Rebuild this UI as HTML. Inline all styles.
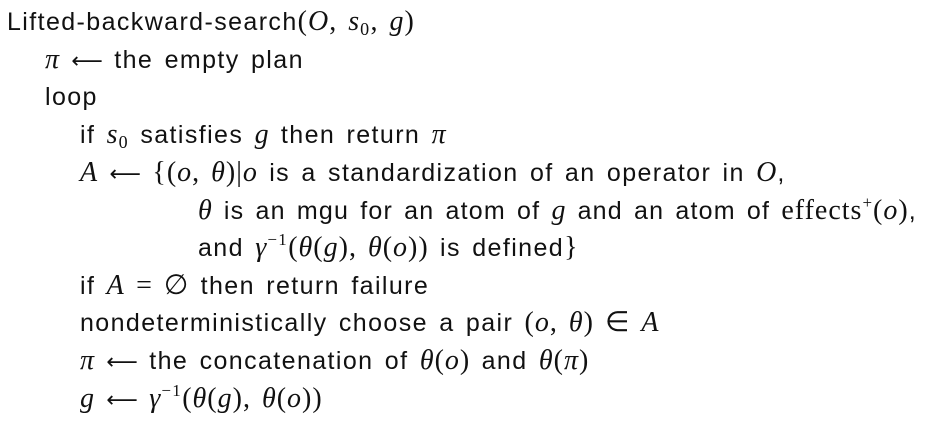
<!DOCTYPE html>
<html><head><meta charset="utf-8"><style>
body{margin:0;width:933px;height:428px;background:#fff;overflow:hidden;position:relative;font-family:"Liberation Sans",sans-serif;font-size:25px;letter-spacing:1.4px;word-spacing:3px;color:#111}
.l{position:absolute;line-height:24px;white-space:nowrap}
i{font-family:"Liberation Serif",serif;font-style:italic;font-size:28px;letter-spacing:1px}
.r{font-family:"Liberation Serif",serif;font-size:28px;letter-spacing:1px}
.a{font-family:"DejaVu Sans",sans-serif;font-size:22px;letter-spacing:0}
sub{font-family:"Liberation Serif",serif;font-size:18px;vertical-align:-5px;line-height:0}
sup{font-size:17px;vertical-align:11px;line-height:0;font-family:"Liberation Serif",serif}
</style></head><body>
<div class="l" style="left:7px;top:10px">Lifted-backward-search<span class="r">(</span><i>O</i><span class="r">, </span><i>s</i><sub>0</sub><span class="r">, </span><i>g</i><span class="r">)</span></div>
<div class="l" style="left:45px;top:48px"><i>π</i> <span class="a">⟵</span> the empty plan</div>
<div class="l" style="left:45px;top:85px">loop</div>
<div class="l" style="left:80px;top:123px">if <i>s</i><sub>0</sub> satisfies <i>g</i> then return <i>π</i></div>
<div class="l" style="left:80px;top:161px"><i>A</i> <span class="a">⟵</span> <span class="r">{(</span><i>o</i><span class="r">, </span><i>θ</i><span class="r">)|</span><i>o</i> is a standardization of an operator in <i>O</i>,</div>
<div class="l" style="left:198px;top:199px;letter-spacing:1.2px"><i>θ</i> is an mgu for an atom of <i>g</i> and an atom of <span class="r">effects<sup>+</sup>(</span><i>o</i><span class="r">)</span>,</div>
<div class="l" style="left:198px;top:236px">and <i>γ</i><sup>−1</sup><span class="r">(</span><i>θ</i><span class="r">(</span><i>g</i><span class="r">), </span><i>θ</i><span class="r">(</span><i>o</i><span class="r">))</span> is defined<span class="r">}</span></div>
<div class="l" style="left:80px;top:274px">if <i>A</i> <span class="r">= ∅</span> then return failure</div>
<div class="l" style="left:80px;top:311px">nondeterministically choose a pair <span class="r">(</span><i>o</i><span class="r">, </span><i>θ</i><span class="r">) ∈ </span><i>A</i></div>
<div class="l" style="left:80px;top:349px"><i>π</i> <span class="a">⟵</span> the concatenation of <i>θ</i><span class="r">(</span><i>o</i><span class="r">)</span> and <i>θ</i><span class="r">(</span><i>π</i><span class="r">)</span></div>
<div class="l" style="left:80px;top:387px"><i>g</i> <span class="a">⟵</span> <i>γ</i><sup>−1</sup><span class="r">(</span><i>θ</i><span class="r">(</span><i>g</i><span class="r">), </span><i>θ</i><span class="r">(</span><i>o</i><span class="r">))</span></div>
</body></html>
